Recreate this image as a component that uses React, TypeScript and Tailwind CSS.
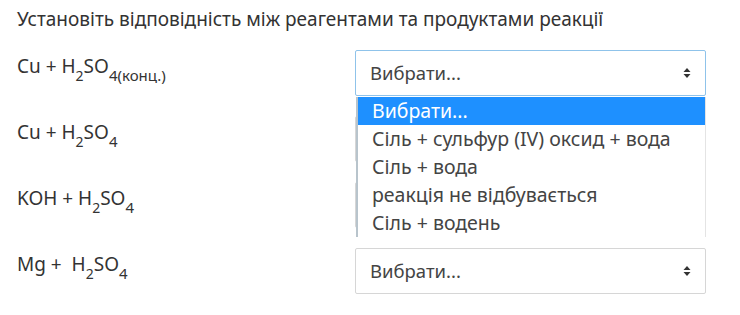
import React from "react";

const font = { fontFamily: '"Noto Sans", "Open Sans", sans-serif' };

function H2SO4({ tail }: { tail?: string }) {
  return (
    <>
      H<sub className="text-[14px] align-[-4px]">2</sub>SO<sub className="text-[15px] align-[-4px]">4{tail}</sub>
    </>
  );
}

function Arrows() {
  return (
    <svg width="8" height="12" viewBox="0 0 8 12" className="text-[#333]">
      <path d="M4 1 L7.5 5 H0.5 Z" fill="currentColor" />
      <path d="M4 11 L7.5 7 H0.5 Z" fill="currentColor" />
    </svg>
  );
}

function SelectBox({ focused, covered, children }: { focused?: boolean; covered?: boolean; children?: React.ReactNode }) {
  return (
    <div
      className={
        "relative flex h-[46px] w-[351px] items-center justify-between rounded-[2px] border bg-white pl-[14px] pr-[14px] text-[18.5px] text-[#444] " +
        (focused ? "border-[#8fc3ea]" : "border-[#d6d6d6]")
      }
    >
      {!covered && (
        <>
          <span>Вибрати...</span>
          <Arrows />
        </>
      )}
      {children}
    </div>
  );
}

const options = ["Вибрати...", "Сіль + сульфур (IV) оксид + вода", "Сіль + вода", "реакція не відбувається", "Сіль + водень"];

export default function App() {
  const rows = [
    <>Cu + <H2SO4 tail="(конц.)" /></>,
    <>Cu + <H2SO4 /></>,
    <>KOH + <H2SO4 /></>,
    <>Mg + &nbsp;<H2SO4 /></>,
  ];

  return (
    <div className="h-[315px] w-[740px] bg-white px-[17px] pt-[6px] text-[#333]" style={font}>
      <p className="text-[19px] leading-[26px]">Установіть відповідність між реагентами та продуктами реакції</p>
      <div className="mt-[18px] flex flex-col gap-[20px]">
        {rows.map((label, i) => (
          <div key={i} className="flex">
            <div className="w-[338px] pt-[3px] text-[19px] leading-[26px]">{label}</div>
            {i === 0 ? (
              <SelectBox focused>
                <div className="absolute left-[0px] top-[46px] z-10 w-[350px] border-l-2 border-r border-l-[#b8c4cc] border-r-[#e4e4e4] bg-white text-[19.5px] leading-[28px] text-[#444]">
                  {options.map((o, j) => (
                    <div key={j} className={"h-[28px] pl-[14px] " + (j === 0 ? "bg-[#1e90ff] text-white" : "")}>
                      {o}
                    </div>
                  ))}
                </div>
              </SelectBox>
            ) : (
              <SelectBox covered={i === 1 || i === 2} />
            )}
          </div>
        ))}
      </div>
    </div>
  );
}
